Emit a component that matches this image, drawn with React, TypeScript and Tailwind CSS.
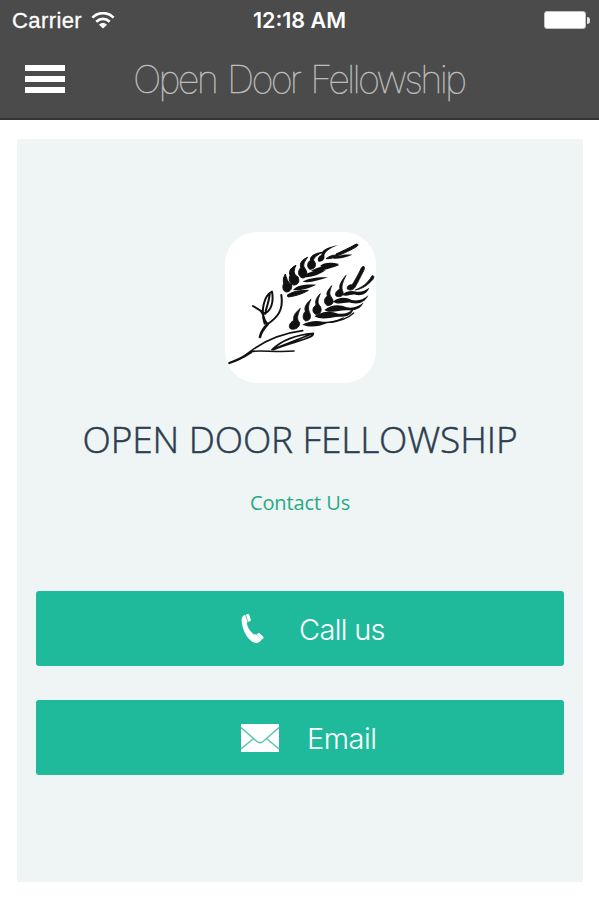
import type { ReactNode } from 'react';
import React from 'react';

const WifiIcon = () => (
  <svg width="24" height="17" viewBox="0 0 24 17" fill="none">
    <path
      d="M1.4 5.6C7.4-.4 16.600-.4 22.600 5.600"
      stroke="#fff"
      strokeWidth="2.700"
    />
    <path
      d="M5.300 9.700c4-3.800 9.400-3.800 13.400 0"
      stroke="#fff"
      strokeWidth="2.700"
    />
    <path d="M8 12.700c2.200-2.200 5.800-2.200 8 0l-4 3.900z" fill="#fff" />
  </svg>
);

const BatteryIcon = () => (
  <div className="flex items-center gap-px">
    <div className="h-[18px] w-[42px] rounded-[3px] border border-[#c4c4c4] bg-white" />
    <div className="h-[7px] w-[3px] rounded-r-full bg-[#e4e4e4]" />
  </div>
);

const PhoneIcon = () => (
  <svg width="23" height="30" viewBox="0 0 23 30" fill="#fff">
    <path d="M.6 5.500C.500 3.300 2.100 1.300 4.200.7l2.300 6.800-.6 2c.6 4.200 3.200 8.100 7 10.900l2.300-.1 5.400 5.200c-1.500 2.700-4.200 4.300-7 3.300C6.400 26.300.7 15.500.6 5.500z" />
    <path d="M5 .4 7 .1c.8 0 1.200.5 1.400 1.100l1.400 4.500c.1.700-.2 1.200-.8 1.500L7.100 7.800zM15.700 20.300l1.400-1c.6-.4 1.200-.3 1.700.1l3.300 3.200c.5.600.5 1.200.1 1.800l-1.400 1.400z" />
  </svg>
);

const MailIcon = () => (
  <svg width="38" height="28" viewBox="0 0 38 28" fill="none">
    <path d="M0 0h38v28H0z" fill="#fff" />
    <path
      d="M0 3.500 15.600 17.200q3.400 2.900 6.800 0L38 3.500M0 25l12.500-10.500M38 25 25.500 14.500"
      stroke="#5cc5ac"
      strokeWidth="1.500"
    />
  </svg>
);

const WheatLogo = () => (
  <svg width="151" height="151" viewBox="15 22 453 453" fill="#111">
    {/* stems and leaves */}
    <g fill="none" stroke="#111" strokeLinecap="round" strokeLinejoin="round">
      <path d="M28 415c22-7 42-17 65-32" strokeWidth="7" />
      <path
        d="M70 397c42-37 100-69 178-79M92 381c26-6 78 3 130-2"
        strokeWidth="5"
      />
      <path
        d="M156 375c28-27 65-44 124-49 3 15-60 24-120 49M168 370l105-41"
        strokeWidth="5"
      />
      <path d="M120 337c3-16 12-27 23-39" strokeWidth="8" />
      <path d="M143 298c30-20 48-42 41-87" strokeWidth="6" />
      <path
        d="M99 244l37 23M134 297c-13-40-2-84 22-96 6 32-3 57-22 66M122 259c12 10 5 24 20 39M149 209c-2 20-9 39-12 50"
        strokeWidth="6"
      />
    </g>

    {/* upper ear */}
    <g stroke="#111" strokeWidth="3" strokeLinejoin="round">
      <path d="M196 148c-7 12-7 20-5 28-5 12-2 24 8 26 12-1 18-10 16-23-10-5-14-12-19-31zM228 122c-20 9-21 20-18 31-5 10-1 24 11 28 14 0 19-11 13-24-10-7-17-13-6-35zM263 98c-19 8-24 18-21 31-10 11-8 27 6 31 14-1 16-14 8-27-8-9-6-19 7-35zM306 83c-25 4-37 13-34 24-11 5-12 22-2 27 14-1 21-11 13-24-6-5 0-14 23-27z" />
      <path d="M202 211c16-11 39-14 63-14-16 10-40 18-61 20zM318 102c13-9 21-12 35-10-10 8-22 11-35 10z" />
      <path d="M348 88c19-9 38-17 61-30 6 0 6 4 2 7-17 11-37 20-63 30z" />
    </g>
    <path d="M354 61c-37 8-51 17-50 30-11 4-13 15-8 20 14 0 19-9 17-18 2-11 12-20 41-32z" />
    <path d="M219 196c11-14 36-18 70-16-19 9-44 19-70 16zM247 171c18-9 38-14 77-13-27 9-56 18-77 13zM246 156c24-16 41-20 72-19-25 16-48 24-72 19zM272 139c20-12 47-19 86-18-26 11-59 21-86 18zM300 124c13-12 33-11 58-6-21 11-39 12-58 6zM340 97c18-5 35-8 57-7-20 8-40 13-57 12z" />

    {/* lower ear, seeds first */}
    <g stroke="#111" strokeWidth="2.500" strokeLinejoin="round">
      <path d="M241 251c-19 17-21 24-20 36-14 9-16 20-9 26 15 3 28-5 27-19-9-9-8-19 2-43zM273 224c-19 17-20 26-17 36-9 9-9 24 1 29 13-1 18-10 12-25-5-10-5-22 4-40zM301 207c-13 13-16 23-13 34-12 8-12 21-2 28 14 2 22-9 15-24-10-9-8-20 0-38zM335 183c-12 15-17 20-13 31-14 10-9 25 1 29 18-2 21-12 11-26-7-7-5-18 1-34zM378 152c-18 22-21 32-18 41-12 5-18 18-10 22 16 4 24-5 17-18-3-12 1-25 11-45zM429 125c6 0 5 7 2 13-10 19-17 35-26 50-6 8-15 11-23 5-2-8 6-14 14-12 11-17 18-31 24-43 3-7 5-10 9-13z" />
      <path d="M456 153c7-1 7 6 2 12-14 15-28 27-52 31 20-9 36-18 50-43z" />
    </g>
    <path d="M247 300c18-10 40-13 62-9 28 0 46-6 65-15-11 13-30 18-53 20-25 10-51 14-74 4zM283 275c22-16 48-18 72-8 18 2 34-2 47-16-7 21-23 27-44 25-25 1-51 12-75-1zM313 256c24-18 46-16 67-8 18 4 34-1 51-15-9 20-25 26-48 24-25-2-48 12-70-1zM339 231c19-16 40-13 56-5 18 4 34 0 50-14-9 20-27 28-50 23-19-5-38 8-56-4zM365 210c16-12 31-13 45-9 14 2 26-4 38-12-8 19-21 24-39 22-15-5-28 8-44-1z" />
    <path
      d="M330 293c30-4 52-10 71-28"
      fill="none"
      stroke="#111"
      strokeWidth="4"
      strokeLinecap="round"
    />
  </svg>
);

type ActionButtonProps = {
  icon: ReactNode;
  children: ReactNode;
};

const ActionButton = ({ icon, children }: ActionButtonProps) => (
  <button
    type="button"
    className="flex h-[75px] w-full items-center rounded-[3px] bg-[#1fba9b] pl-[205px] text-[29px] font-light text-white"
  >
    {icon}
    {children}
  </button>
);

const App = () => {
  return (
    <div className="flex h-[900px] w-[599px] flex-col bg-white font-['Inter',sans-serif]">
      <header className="h-[120px] border-b-2 border-[#333] bg-[#4b4b4b] text-white">
        <div className="grid h-10 grid-cols-3 items-center pr-[9px] pl-3 font-['Liberation_Sans',sans-serif] text-[22px]">
          <div className="flex items-center gap-[9px]">
            <span className="tracking-[0.4px] [-webkit-text-stroke:0.3px_#fff]">
              Carrier
            </span>
            <WifiIcon />
          </div>
          <span className="-ml-[3px] text-center font-['Inter',sans-serif] text-[21.500px] font-semibold whitespace-nowrap">
            12:18 AM
          </span>
          <div className="flex justify-end">
            <BatteryIcon />
          </div>
        </div>
        <div className="flex h-[78px] items-center pl-[25px]">
          <button type="button" className="flex w-10 flex-col gap-[5px]">
            <span className="h-1.5 w-full bg-white" />
            <span className="h-1.5 w-full bg-white" />
            <span className="h-1.5 w-full bg-white" />
          </button>
          <h1 className="ml-[68px] text-[38px] font-thin tracking-[-2.8px] whitespace-nowrap text-[#c4c4c4] [-webkit-text-stroke:0.3px_#c4c4c4] [word-spacing:3px]">
            Open Door Fellowship
          </h1>
        </div>
      </header>

      <main className="mx-[17px] mt-[19px] flex h-[743px] w-[566px] flex-col items-center bg-[#eff4f5] px-[19px] pt-[93px]">
        <div className="size-[151px] rounded-[32px] bg-white">
          <WheatLogo />
        </div>
        <h2 className="mt-[31px] font-['Open_Sans',sans-serif] text-[37px] leading-[50px] font-light tracking-[-0.1px] whitespace-nowrap text-[#2c3e50] [-webkit-text-stroke:0.5px_#2c3e50]">
          OPEN DOOR FELLOWSHIP
        </h2>
        <p className="mt-[25px] font-['Open_Sans',sans-serif] text-[20px] leading-7 tracking-[-0.1px] whitespace-nowrap text-[#28a985]">
          Contact Us
        </p>
        <div className="mt-[74px] flex w-full flex-col gap-[34px]">
          <ActionButton icon={<PhoneIcon />}>
            <span className="mt-0.5 ml-[35px] tracking-[-0.7px]">Call us</span>
          </ActionButton>
          <ActionButton icon={<MailIcon />}>
            <span className="mt-0.5 ml-7 tracking-[-0.5px]">Email</span>
          </ActionButton>
        </div>
      </main>
    </div>
  );
};

export default App;
